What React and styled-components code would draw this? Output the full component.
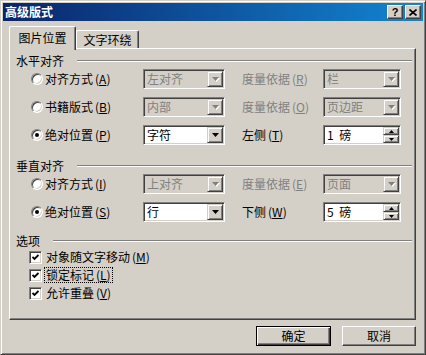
import React from "react";
import styled, { createGlobalStyle } from "styled-components";

const c = {
  face: "#d4d0c8",
  shadow: "#808080",
  dark: "#404040",
  light: "#ffffff",
  gray: "#808080",
};

const GlobalStyle = createGlobalStyle`
  html, body {
    margin: 0;
    padding: 0;
    background: ${c.face};
  }
  body {
    font-family: "Noto Sans CJK SC", "DejaVu Sans", sans-serif;
    font-size: 12px;
    line-height: 14px;
    color: #000;
  }
  * { box-sizing: border-box; }
`;

const Window = styled.div`
  width: 426px;
  height: 355px;
  background: ${c.face};
  border: 1px solid;
  border-color: ${c.face} ${c.dark} ${c.dark} ${c.face};
  box-shadow: inset 1px 1px ${c.light}, inset -1px -1px ${c.shadow};
  padding: 2px;
  display: flex;
  flex-direction: column;
`;

const TitleBar = styled.div`
  height: 18px;
  flex: none;
  background: linear-gradient(to right, #0a246a, #1285d3);
  display: flex;
  align-items: center;
  justify-content: space-between;
  padding: 0 2px;
`;

const Title = styled.span`
  color: #fff;
  font-weight: bold;
  font-size: 12px;
`;

const CaptionButtons = styled.div`
  display: flex;
  gap: 2px;
`;

const CaptionButton = styled.div`
  width: 16px;
  height: 14px;
  background: ${c.face};
  border: 1px solid;
  border-color: ${c.light} ${c.dark} ${c.dark} ${c.light};
  box-shadow: inset -1px -1px ${c.shadow};
  display: flex;
  align-items: center;
  justify-content: center;
  font-family: "Liberation Sans", sans-serif;
  font-weight: bold;
  font-size: 11px;
  line-height: 11px;
`;

const Body = styled.div`
  flex: 1;
  display: flex;
  flex-direction: column;
  padding: 5px 6px 0 6px;
`;

const TabStrip = styled.div`
  height: 22px;
  display: flex;
  align-items: flex-end;
  position: relative;
  z-index: 1;
`;

const Tab = styled.div`
  width: ${(p) => p.$width}px;
  height: ${(p) => (p.$active ? 24 : 18)}px;
  margin-bottom: ${(p) => (p.$active ? -2 : 0)}px;
  padding-bottom: ${(p) => (p.$active ? 2 : 0)}px;
  background: ${c.face};
  border-top: 1px solid ${c.light};
  border-left: 1px solid ${c.light};
  border-right: 1px solid ${c.dark};
  border-radius: 2px 2px 0 0;
  box-shadow: inset -1px 0 ${c.shadow};
  display: flex;
  align-items: center;
  justify-content: center;
`;

const Panel = styled.div`
  width: 407px;
  height: 272px;
  border: 1px solid;
  border-color: ${c.light} ${c.dark} ${c.dark} ${c.light};
  box-shadow: inset -1px -1px ${c.shadow};
  display: flex;
  flex-direction: column;
`;

const SectionHeader = styled.div`
  height: 14px;
  margin-top: ${(p) => p.$top}px;
  padding: 0 3px 0 6px;
  display: flex;
  align-items: center;
  gap: 13px;
`;

const SectionLine = styled.div`
  flex: 1;
  height: 2px;
  border-top: 1px solid ${c.shadow};
  border-bottom: 1px solid ${c.light};
`;

const Rows = styled.div`
  margin-top: 1px;
  display: flex;
  flex-direction: column;
  gap: ${(p) => p.$gap}px;
`;

const Row = styled.div`
  height: 20px;
  display: flex;
  align-items: center;
  padding-left: 21px;
`;

const OptionCell = styled.div`
  width: 112px;
  display: flex;
  align-items: center;
  gap: 2px;
`;

const Radio = styled.div`
  width: 12px;
  height: 12px;
  border-radius: 50%;
  background: #fff;
  border: 1px solid;
  border-color: ${c.shadow} ${c.light} ${c.light} ${c.shadow};
  box-shadow: inset 1px 1px ${c.dark}, inset -1px -1px ${c.face};
  display: flex;
  align-items: center;
  justify-content: center;

  &::after {
    content: "";
    width: 4px;
    height: 4px;
    border-radius: 50%;
    background: ${(p) => (p.$checked ? "#000" : "transparent")};
  }
`;

const Label = styled.span`
  color: ${(p) => (p.$disabled ? c.gray : "#000")};
  white-space: nowrap;
`;

const KeyParen = styled.span`
  margin-left: 2px;
`;

const LabelCell = styled.div`
  width: 98px;
  padding-left: 17px;
  display: flex;
  align-items: center;
`;

const Field = styled.div`
  width: ${(p) => p.$width}px;
  height: 20px;
  padding: 1px;
  background: ${(p) => (p.$disabled ? c.face : "#fff")};
  border: 1px solid;
  border-color: ${c.shadow} ${c.light} ${c.light} ${c.shadow};
  box-shadow: inset 1px 1px ${c.dark}, inset -1px -1px ${c.face};
  display: flex;
  align-items: stretch;
`;

const FieldText = styled.div`
  flex: 1;
  padding-left: 2px;
  display: flex;
  align-items: center;
  white-space: pre;
  word-spacing: 3px;
  color: ${(p) => (p.$disabled ? c.gray : "#000")};
`;

const RaisedBox = styled.div`
  background: ${c.face};
  border: 1px solid;
  border-color: ${c.face} ${c.dark} ${c.dark} ${c.face};
  box-shadow: inset 1px 1px ${c.light}, inset -1px -1px ${c.shadow};
  display: flex;
  align-items: center;
  justify-content: center;
`;

const DropButton = styled(RaisedBox)`
  width: 16px;
`;

const Spinner = styled.div`
  width: 16px;
  display: flex;
  flex-direction: column;
`;

const SpinButton = styled(RaisedBox)`
  flex: 1;
`;

const CheckRows = styled.div`
  margin-top: 1px;
  display: flex;
  flex-direction: column;
  gap: 2px;
`;

const CheckRow = styled.div`
  height: 16px;
  display: flex;
  align-items: center;
  padding-left: 19px;
  gap: 3px;
`;

const CheckBox = styled.div`
  width: 13px;
  height: 13px;
  background: #fff;
  border: 1px solid;
  border-color: ${c.shadow} ${c.light} ${c.light} ${c.shadow};
  box-shadow: inset 1px 1px ${c.dark}, inset -1px -1px ${c.face};
  display: flex;
  align-items: center;
  justify-content: center;
`;

const CheckLabel = styled.span`
  padding: 0 1px;
  outline: ${(p) => (p.$focus ? "1px dotted #000" : "none")};
  white-space: nowrap;
`;

const Footer = styled.div`
  display: flex;
  justify-content: flex-end;
  gap: 11px;
  padding: 6px 1px 0 0;
`;

const Button = styled.div`
  width: ${(p) => p.$width}px;
  height: 20px;
  background: ${c.face};
  border: 1px solid;
  border-color: ${(p) =>
    p.$default ? "#000" : `${c.light} ${c.dark} ${c.dark} ${c.light}`};
  box-shadow: ${(p) =>
    p.$default
      ? `inset 1px 1px ${c.light}, inset -1px -1px ${c.dark}, inset -2px -2px ${c.shadow}`
      : `inset -1px -1px ${c.shadow}`};
  display: flex;
  align-items: center;
  justify-content: center;
`;

function Arrow({ disabled }) {
  const pts = "0,0 7,0 3.5,4";
  return (
    <svg width="7" height="4" style={{ overflow: "visible" }}>
      {disabled && <polygon points={pts} fill="#fff" transform="translate(1,1)" />}
      <polygon points={pts} fill={disabled ? c.gray : "#000"} />
    </svg>
  );
}

function Key({ text, k }) {
  return (
    <>
      {text}
      <KeyParen>
        (<u>{k}</u>)
      </KeyParen>
    </>
  );
}

function Select({ width, value, disabled }) {
  return (
    <Field $width={width} $disabled={disabled}>
      <FieldText $disabled={disabled}>{value}</FieldText>
      <DropButton>
        <Arrow disabled={disabled} />
      </DropButton>
    </Field>
  );
}

function SpinField({ width, value }) {
  return (
    <Field $width={width}>
      <FieldText>{value}</FieldText>
      <Spinner>
        <SpinButton>
          <svg width="5" height="3">
            <polygon points="0,3 2.5,0 5,3" fill="#000" />
          </svg>
        </SpinButton>
        <SpinButton>
          <svg width="5" height="3">
            <polygon points="0,0 5,0 2.5,3" fill="#000" />
          </svg>
        </SpinButton>
      </Spinner>
    </Field>
  );
}

function OptionRow({ row }) {
  return (
    <Row>
      <OptionCell>
        <Radio $checked={row.checked} />
        <Label>
          <Key text={row.label} k={row.k} />
        </Label>
      </OptionCell>
      <Select width={82} value={row.value} disabled={!row.checked} />
      <LabelCell>
        <Label $disabled={!row.checked}>
          <Key text={row.side} k={row.sk} />
        </Label>
      </LabelCell>
      {row.checked ? (
        <SpinField width={78} value={row.amount} />
      ) : (
        <Select width={78} value={row.amount} disabled />
      )}
    </Row>
  );
}

const horizontal = [
  { label: "对齐方式", k: "A", value: "左对齐", side: "度量依据", sk: "R", amount: "栏" },
  { label: "书籍版式", k: "B", value: "内部", side: "度量依据", sk: "O", amount: "页边距" },
  { checked: true, label: "绝对位置", k: "P", value: "字符", side: "左侧", sk: "T", amount: "1 磅" },
];

const vertical = [
  { label: "对齐方式", k: "I", value: "上对齐", side: "度量依据", sk: "E", amount: "页面" },
  { checked: true, label: "绝对位置", k: "S", value: "行", side: "下侧", sk: "W", amount: "5 磅" },
];

const options = [
  { label: "对象随文字移动", k: "M" },
  { label: "锁定标记", k: "L", focus: true },
  { label: "允许重叠", k: "V" },
];

function Check() {
  return (
    <svg width="7" height="7">
      <polyline points="0.5,3 2.5,5 6.5,1" fill="none" stroke="#000" strokeWidth="1.8" />
    </svg>
  );
}

export default function App() {
  return (
    <>
      <GlobalStyle />
      <Window>
        <TitleBar>
          <Title>高级版式</Title>
          <CaptionButtons>
            <CaptionButton>?</CaptionButton>
            <CaptionButton>
              <svg width="8" height="7">
                <path d="M0.5 0.5 L7.5 6.5 M7.5 0.5 L0.5 6.5" stroke="#000" strokeWidth="1.6" />
              </svg>
            </CaptionButton>
          </CaptionButtons>
        </TitleBar>
        <Body>
          <TabStrip>
            <Tab $active $width={67}>图片位置</Tab>
            <Tab $width={63}>文字环绕</Tab>
          </TabStrip>
          <Panel>
            <SectionHeader $top={5}>
              <span>水平对齐</span>
              <SectionLine />
            </SectionHeader>
            <Rows $gap={8}>
              {horizontal.map((r, i) => (
                <OptionRow key={i} row={r} />
              ))}
            </Rows>
            <SectionHeader $top={14}>
              <span>垂直对齐</span>
              <SectionLine />
            </SectionHeader>
            <Rows $gap={8}>
              {vertical.map((r, i) => (
                <OptionRow key={i} row={r} />
              ))}
            </Rows>
            <SectionHeader $top={12}>
              <span>选项</span>
              <SectionLine />
            </SectionHeader>
            <CheckRows>
              {options.map((o) => (
                <CheckRow key={o.k}>
                  <CheckBox>
                    <Check />
                  </CheckBox>
                  <CheckLabel $focus={o.focus}>
                    <Key text={o.label} k={o.k} />
                  </CheckLabel>
                </CheckRow>
              ))}
            </CheckRows>
          </Panel>
          <Footer>
            <Button $default $width={75}>确定</Button>
            <Button $width={74}>取消</Button>
          </Footer>
        </Body>
      </Window>
    </>
  );
}
